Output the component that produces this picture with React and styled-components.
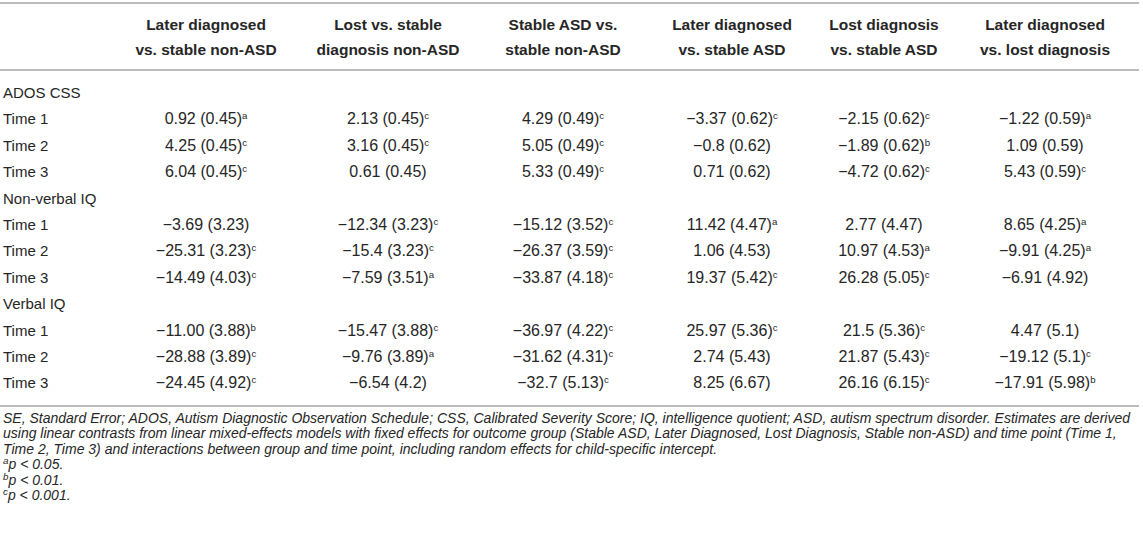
import styled, { createGlobalStyle } from 'styled-components'

const GlobalStyle = createGlobalStyle`
  body {
    margin: 0;
    background: #fff;
    color: #262626;
    font-family: "Liberation Sans", Arial, sans-serif;
  }
`

const Page = styled.div`
  padding-top: 2px;
  width: 1139px;
`

const Table = styled.table`
  width: 1139px;
  border-collapse: collapse;
  table-layout: fixed;
  border-top: 2px solid #bcbcbc;
  border-bottom: 2px solid #bcbcbc;
`

const Head = styled.thead`
  border-bottom: 2px solid #bcbcbc;
`

const HeadCell = styled.th`
  font-size: 15.5px;
  font-weight: bold;
  line-height: 25px;
  padding: 8px 2px 7px;
  text-align: center;
  white-space: nowrap;
`

const Cell = styled.td`
  font-size: ${p => (p.$label ? '15px' : '16px')};
  line-height: 18.4px;
  text-align: ${p => (p.$label ? 'left' : 'center')};
  padding: ${p => (p.$first ? '13px' : '4px')} 2px ${p => (p.$last ? '12px' : '4px')}
    ${p => (p.$label ? '3px' : '2px')};
  white-space: nowrap;
`

const Sup = styled.span`
  font-size: ${p => (p.$note ? '0.7em' : '0.6em')};
  vertical-align: 0.55em;
  line-height: 0;
`

const Notes = styled.div`
  padding: 4px 0 0 3px;
  width: 1136px;
  font-size: 14px;
  line-height: 15.4px;
  font-style: italic;
`

const NoteLine = styled.div``

const widths = [115, 182, 182, 168, 170, 134, 188]

const headers = [
  ['Later diagnosed', 'vs. stable non-ASD'],
  ['Lost vs. stable', 'diagnosis non-ASD'],
  ['Stable ASD vs.', 'stable non-ASD'],
  ['Later diagnosed', 'vs. stable ASD'],
  ['Lost diagnosis', 'vs. stable ASD'],
  ['Later diagnosed', 'vs. lost diagnosis'],
]

const groups = [
  {
    name: 'ADOS CSS',
    rows: [
      ['0.92 (0.45)a', '2.13 (0.45)c', '4.29 (0.49)c', '−3.37 (0.62)c', '−2.15 (0.62)c', '−1.22 (0.59)a'],
      ['4.25 (0.45)c', '3.16 (0.45)c', '5.05 (0.49)c', '−0.8 (0.62)', '−1.89 (0.62)b', '1.09 (0.59)'],
      ['6.04 (0.45)c', '0.61 (0.45)', '5.33 (0.49)c', '0.71 (0.62)', '−4.72 (0.62)c', '5.43 (0.59)c'],
    ],
  },
  {
    name: 'Non-verbal IQ',
    rows: [
      ['−3.69 (3.23)', '−12.34 (3.23)c', '−15.12 (3.52)c', '11.42 (4.47)a', '2.77 (4.47)', '8.65 (4.25)a'],
      ['−25.31 (3.23)c', '−15.4 (3.23)c', '−26.37 (3.59)c', '1.06 (4.53)', '10.97 (4.53)a', '−9.91 (4.25)a'],
      ['−14.49 (4.03)c', '−7.59 (3.51)a', '−33.87 (4.18)c', '19.37 (5.42)c', '26.28 (5.05)c', '−6.91 (4.92)'],
    ],
  },
  {
    name: 'Verbal IQ',
    rows: [
      ['−11.00 (3.88)b', '−15.47 (3.88)c', '−36.97 (4.22)c', '25.97 (5.36)c', '21.5 (5.36)c', '4.47 (5.1)'],
      ['−28.88 (3.89)c', '−9.76 (3.89)a', '−31.62 (4.31)c', '2.74 (5.43)', '21.87 (5.43)c', '−19.12 (5.1)c'],
      ['−24.45 (4.92)c', '−6.54 (4.2)', '−32.7 (5.13)c', '8.25 (6.67)', '26.16 (6.15)c', '−17.91 (5.98)b'],
    ],
  },
]

const Value = ({ text }) => {
  const m = text.match(/^(.*\))([abc])$/)
  if (!m) return text
  return (
    <>
      {m[1]}
      <Sup>{m[2]}</Sup>
    </>
  )
}

const lines = []
groups.forEach((g, gi) => {
  lines.push({ label: g.name, values: null, first: gi === 0 })
  g.rows.forEach((r, ri) => {
    lines.push({ label: `Time ${ri + 1}`, values: r, last: gi === groups.length - 1 && ri === 2 })
  })
})

const App = () => {
  return (
    <Page>
      <GlobalStyle />
      <Table>
        <colgroup>
          {widths.map((w, i) => (
            <col key={i} style={{ width: w }} />
          ))}
        </colgroup>
        <Head>
          <tr>
            <HeadCell />
            {headers.map((h, i) => (
              <HeadCell key={i}>
                {h[0]}
                <br />
                {h[1]}
              </HeadCell>
            ))}
          </tr>
        </Head>
        <tbody>
          {lines.map((l, i) => (
            <tr key={i}>
              <Cell $label $first={l.first} $last={l.last}>
                {l.label}
              </Cell>
              {(l.values || ['', '', '', '', '', '']).map((v, j) => (
                <Cell key={j} $first={l.first} $last={l.last}>
                  <Value text={v} />
                </Cell>
              ))}
            </tr>
          ))}
        </tbody>
      </Table>
      <Notes>
        <NoteLine>
          SE, Standard Error; ADOS, Autism Diagnostic Observation Schedule; CSS, Calibrated Severity Score; IQ,
          intelligence quotient; ASD, autism spectrum disorder. Estimates are derived using linear contrasts from
          linear mixed-effects models with fixed effects for outcome group (Stable ASD, Later Diagnosed, Lost
          Diagnosis, Stable non-ASD) and time point (Time 1, Time 2, Time 3) and interactions between group and time
          point, including random effects for child-specific intercept.
        </NoteLine>
        <NoteLine>
          <Sup $note>a</Sup>p &lt; 0.05.
        </NoteLine>
        <NoteLine>
          <Sup $note>b</Sup>p &lt; 0.01.
        </NoteLine>
        <NoteLine>
          <Sup $note>c</Sup>p &lt; 0.001.
        </NoteLine>
      </Notes>
    </Page>
  )
}

export default App
